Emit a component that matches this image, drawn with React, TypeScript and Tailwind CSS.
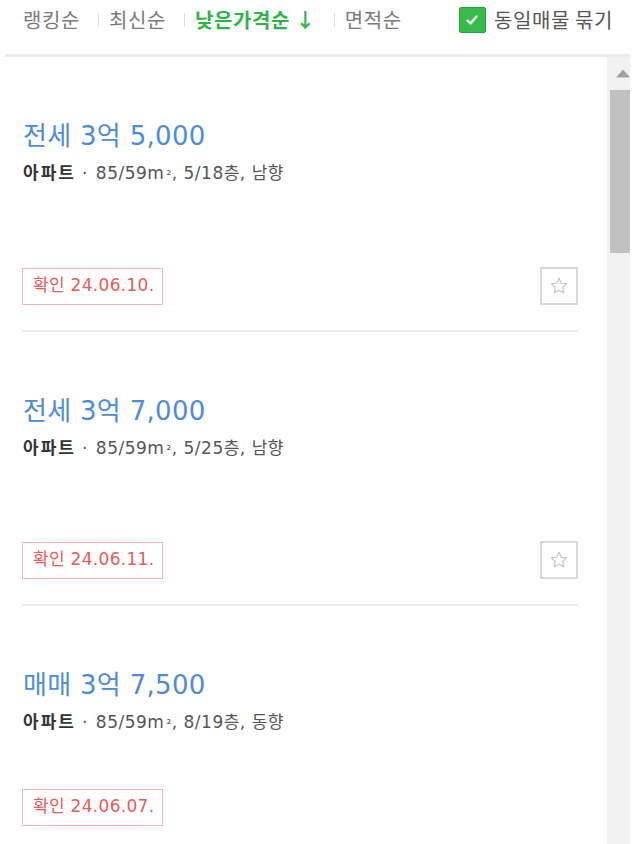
const font = "font-['Noto_Sans_CJK_KR','Noto_Sans',sans-serif]";
const mixed = "font-['DejaVu_Sans','Noto_Sans_CJK_KR',sans-serif]";

type Listing = {
  kind: string;
  price: string;
  floor: string;
  dir: string;
  date: string;
  star: boolean;
  gap: string;
};

const listings: Listing[] = [
  { kind: "전세", price: "3억 5,000", floor: "5/18층", dir: "남향", date: "24.06.10.", star: true, gap: "mt-[84px]" },
  { kind: "전세", price: "3억 7,000", floor: "5/25층", dir: "남향", date: "24.06.11.", star: true, gap: "mt-[83px]" },
  { kind: "매매", price: "3억 7,500", floor: "8/19층", dir: "동향", date: "24.06.07.", star: false, gap: "mt-[56px]" },
];

function Sep() {
  return <span className="ml-[18px] mr-[10px] mt-[6px] h-[14px] w-px bg-[#dddddd]" />;
}

function StarBox() {
  return (
    <div className="flex h-[38px] w-[38px] items-center justify-center border-2 border-[#d9d9d9]">
      <svg width="20" height="20" viewBox="0 0 24 24" fill="none" stroke="#c4c4c4" strokeWidth="1.4" strokeLinejoin="round">
        <path d="M12 2.8l2.75 5.9 6.45.75-4.8 4.4 1.3 6.35L12 17l-5.7 3.2 1.3-6.35-4.8-4.4 6.45-.75z" />
      </svg>
    </div>
  );
}

function Card({ item }: { item: Listing }) {
  return (
    <div className="border-b-2 border-[#ebebeb] pt-[62px] pb-[25px]">
      <div className={`h-[34px] pl-[1px] text-[26px] leading-[34px] tracking-[0.3px] text-[#4b8be0] ${mixed}`}>
        {item.kind} {item.price}
      </div>
      <div className={`mt-[8px] flex h-[22px] items-baseline overflow-visible pl-[1px] text-[17px] leading-[22px] tracking-[0.5px] text-[#555555] ${mixed}`}>
        <span className={`text-[17px] font-bold tracking-[2px] text-[#333333] ${font}`}>아파트</span>
        <span className="ml-[6px] mr-[8px]">·</span>
        <span>85/59m</span>
        <span className="ml-[2px] text-[12px]">²</span>
        <span className="whitespace-pre">, {item.floor}, {item.dir}</span>
      </div>
      <div className={`${item.gap} flex h-[38px] items-center justify-between`}>
        <div className={`flex h-[37px] items-center border border-[#f6b3b3] pl-[10px] pr-[8px] text-[17px] tracking-[0.3px] text-[#ea5a5a] ${mixed}`}>
          확인 {item.date}
        </div>
        {item.star && <StarBox />}
      </div>
    </div>
  );
}

export default function App() {
  return (
    <div className={`h-[844px] w-[640px] overflow-hidden bg-white ${font}`}>
      <div className="flex h-[54px] items-start pl-[23px] pr-[27px] pt-[7px] text-[20px] leading-[26px] tracking-[0.6px] text-[#7a7a7a]">
        <span>랭킹순</span>
        <Sep />
        <span>최신순</span>
        <Sep />
        <span className="font-bold text-[#2fb44a]">낮은가격순 ↓</span>
        <Sep />
        <span>면적순</span>
        <div className="ml-auto flex items-center gap-[8px]">
          <span className="flex h-[26px] w-[27px] items-center justify-center rounded-[2px] border border-[#23a33c] bg-[#38bb4c]">
            <svg width="16" height="16" viewBox="0 0 16 16" fill="none" stroke="white" strokeWidth="2.4" strokeLinecap="round" strokeLinejoin="round">
              <path d="M3.5 8.5l3 3 6-7" />
            </svg>
          </span>
          <span className="text-[#555555]">동일매물 묶기</span>
        </div>
      </div>
      <div className="ml-[5px] h-[3px] w-[625px] bg-[#ebebeb]" />
      <div className="flex h-[787px]">
        <div className="flex-1 pl-[22px] pr-[29px]">
          {listings.map((l, i) => (
            <Card key={i} item={l} />
          ))}
        </div>
        <div className="flex w-[23px] flex-col overflow-hidden bg-[#f1f1f1]">
          <div className="flex h-[33px] items-center pl-[9px]">
            <svg width="16" height="9" viewBox="0 0 16 9">
              <path d="M8 0L16 9H0z" fill="#a3a3a3" />
            </svg>
          </div>
          <div className="ml-[3px] h-[163px] w-[20px] bg-[#c1c1c1]" />
        </div>
        <div className="w-[10px]" />
      </div>
    </div>
  );
}
